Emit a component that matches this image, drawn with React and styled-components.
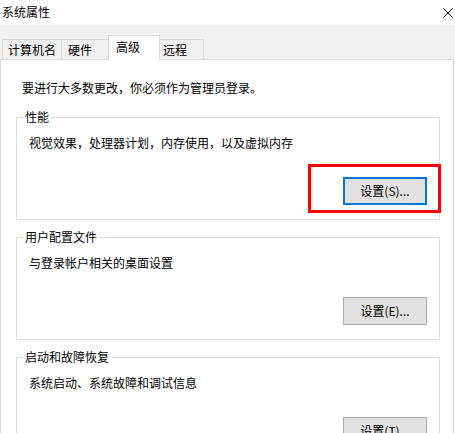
import React from 'react';
import styled, { createGlobalStyle } from 'styled-components';

const GlobalStyle = createGlobalStyle`
    body {
        margin: 0;
        background: #f0f0f0;
        font-family: "Noto Sans CJK SC", "Microsoft YaHei", sans-serif;
        font-size: 12px;
        color: #000;
    }
    * {
        box-sizing: border-box;
    }
`;

const tabs = [
    { label: '计算机名', width: 60, indent: 5 },
    { label: '硬件', width: 48, indent: 6 },
    { label: '高级', width: 52, indent: 7, active: true },
    { label: '远程', width: 45, indent: 3 },
];

const groups = [
    { title: '性能', text: '视觉效果，处理器计划，内存使用，以及虚拟内存', button: '设置(S)...', focused: true },
    { title: '用户配置文件', text: '与登录帐户相关的桌面设置', button: '设置(E)...' },
    { title: '启动和故障恢复', text: '系统启动、系统故障和调试信息', button: '设置(T)...' },
];

const CloseIcon = () => (
    <svg width="10" height="10" viewBox="0 0 10 10">
        <path d="M0.5 0.5 L9.5 9.5 M9.5 0.5 L0.5 9.5" stroke="#000" strokeWidth="1" fill="none" />
    </svg>
);

const App = () => (
    <Window>
        <GlobalStyle />
        <TitleBar>
            <Title>系统属性</Title>
            <CloseButton>
                <CloseIcon />
            </CloseButton>
        </TitleBar>
        <Body>
            <TabStrip>
                {tabs.map((tab) => (
                    <Tab key={tab.label} $width={tab.width} $indent={tab.indent} $active={tab.active}>
                        {tab.label}
                    </Tab>
                ))}
            </TabStrip>
            <Panel>
                <Intro>要进行大多数更改，你必须作为管理员登录。</Intro>
                {groups.map((group) => (
                    <Group key={group.title}>
                        <Legend>{group.title}</Legend>
                        <Description>{group.text}</Description>
                        <ButtonRow>
                            <ButtonWrap>
                                <Button $focused={group.focused}>{group.button}</Button>
                                {group.focused && <Highlight />}
                            </ButtonWrap>
                        </ButtonRow>
                    </Group>
                ))}
            </Panel>
        </Body>
    </Window>
);

export default App;

const Window = styled.div`
    width: 455px;
    height: 433px;
    overflow: hidden;
    display: flex;
    flex-direction: column;
    background: #f0f0f0;
`;

const TitleBar = styled.div`
    height: 25px;
    flex-shrink: 0;
    background: #fff;
    display: flex;
    align-items: center;
    justify-content: space-between;
    padding: 0 2px 1px 2px;
`;

const Title = styled.span`
    line-height: 16px;
`;

const CloseButton = styled.div`
    width: 10px;
    height: 10px;
    display: flex;
    margin-top: 1px;
`;

const Body = styled.div`
    flex: 1;
    display: flex;
    flex-direction: column;
    padding: 10px 1px 0 0;
    min-height: 0;
`;

const TabStrip = styled.div`
    height: 24px;
    flex-shrink: 0;
    display: flex;
    align-items: flex-end;
    padding-left: 2px;
    position: relative;
    z-index: 1;
`;

const Tab = styled.div`
    width: ${(p) => p.$width}px;
    height: ${(p) => (p.$active ? 25 : 20)}px;
    margin-left: -1px;
    margin-bottom: ${(p) => (p.$active ? -1 : 0)}px;
    padding: ${(p) => (p.$active ? 4 : 2)}px 0 0 ${(p) => p.$indent}px;
    line-height: ${(p) => (p.$active ? 14 : 16)}px;
    border: 1px solid #d9d9d9;
    border-bottom: none;
    background: ${(p) => (p.$active ? '#fff' : '#f0f0f0')};
    position: relative;
    z-index: ${(p) => (p.$active ? 2 : 1)};
    white-space: nowrap;

    &:first-child {
        margin-left: 0;
    }
`;

const Panel = styled.div`
    flex: 1;
    background: #fff;
    border: 1px solid #d9d9d9;
    padding: 20px 13px 0 15px;
    display: flex;
    flex-direction: column;
`;

const Intro = styled.div`
    line-height: 16px;
    padding-left: 6px;
    margin-bottom: 13px;
`;

const Group = styled.fieldset`
    margin: 0 0 9px 0;
    padding: 10px 12px 14px 12px;
    border: 1px solid #dcdcdc;
    min-inline-size: 0;
    flex-shrink: 0;
`;

const Legend = styled.legend`
    line-height: 16px;
    padding: 0 2px;
    margin-left: -6px;
`;

const Description = styled.div`
    line-height: 16px;
`;

const ButtonRow = styled.div`
    display: flex;
    justify-content: flex-end;
    margin-top: 26px;
`;

const ButtonWrap = styled.div`
    position: relative;
    display: flex;
`;

const Button = styled.div`
    width: 84px;
    height: 28px;
    display: flex;
    align-items: center;
    justify-content: center;
    background: #e1e1e1;
    border: ${(p) => (p.$focused ? '2px solid #0078d7' : '1px solid #adadad')};
    line-height: 16px;
    padding-bottom: 1px;
`;

const Highlight = styled.div`
    position: absolute;
    left: -35px;
    top: -13px;
    width: 133px;
    height: 49px;
    border: 3px solid #ff0000;
    pointer-events: none;
`;
